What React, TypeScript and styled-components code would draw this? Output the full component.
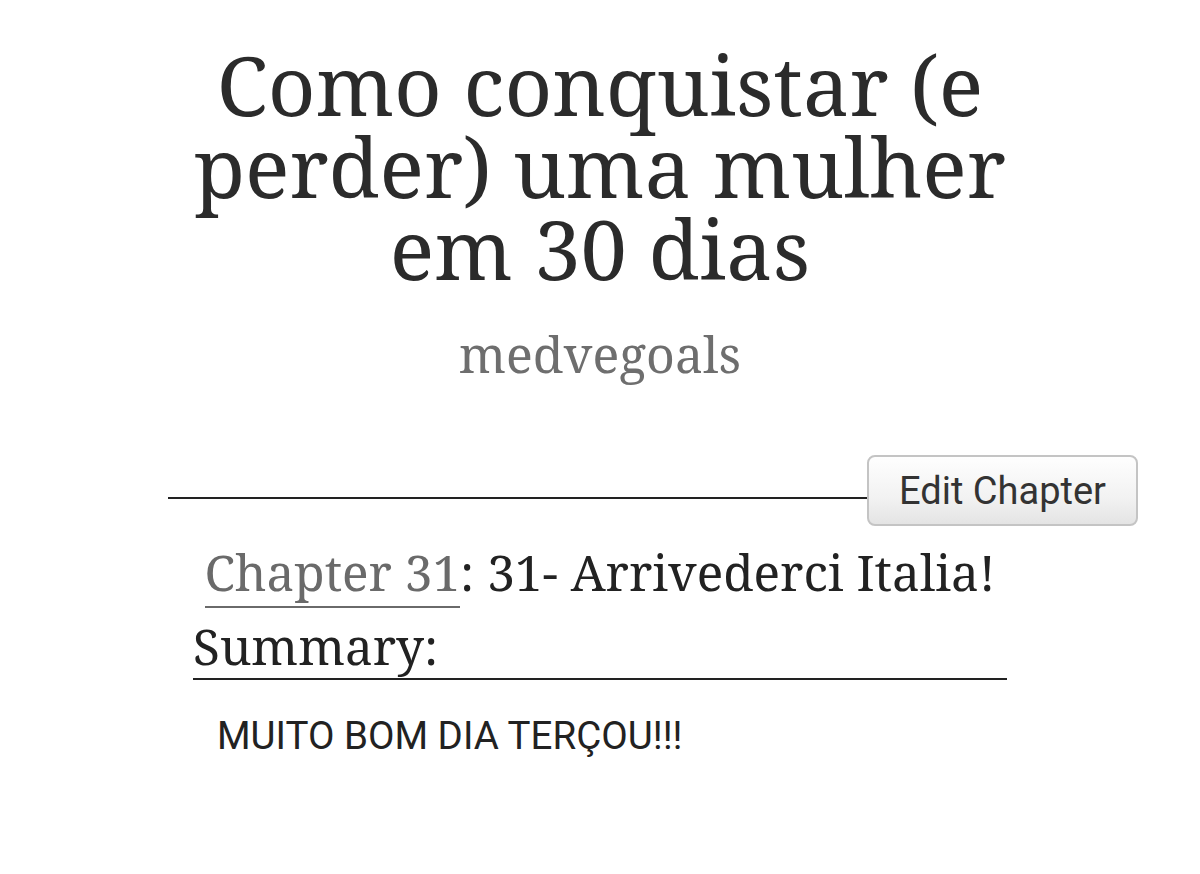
import React from "react";
import styled, { createGlobalStyle } from "styled-components";

const GlobalStyle = createGlobalStyle`
  html, body {
    margin: 0;
    padding: 0;
    background: #ffffff;
  }
  body {
    font-family: "Noto Serif", "DejaVu Serif", serif;
    color: #2b2b2b;
  }
`;

const Page = styled.div`
  width: 1200px;
  padding-top: 43px;
  padding-bottom: 80px;
`;

const Header = styled.header`
  display: flex;
  flex-direction: column;
  align-items: center;
`;

const Title = styled.h1`
  margin: 0;
  font-family: "Noto Serif", "DejaVu Serif", serif;
  font-weight: normal;
  font-size: 83px;
  line-height: 82px;
  text-align: center;
  color: #2b2b2b;
`;

const Author = styled.div`
  margin-top: 35px;
  font-family: "Noto Serif", "DejaVu Serif", serif;
  font-size: 50px;
  line-height: 60px;
  color: #6e6e6e;
`;

const Toolbar = styled.div`
  display: flex;
  align-items: flex-start;
  margin: 71px 62px 0 168px;
`;

const Rule = styled.div`
  flex: 1;
  height: 2px;
  margin-top: 42px;
  background: #222222;
`;

const EditButton = styled.button`
  box-sizing: border-box;
  height: 71px;
  padding: 0 30px;
  display: flex;
  align-items: center;
  font-family: Roboto, "Liberation Sans", sans-serif;
  font-size: 38px;
  color: #333333;
  border: 2px solid #c4c4c4;
  border-radius: 8px;
  background: linear-gradient(#fefefe, #f2f2f2 60%, #e4e4e4);
  cursor: pointer;
`;

const Chapter = styled.section`
  width: 814px;
  margin: 12px auto 0;
`;

const ChapterTitle = styled.h2`
  margin: 0;
  font-family: "Noto Serif", "DejaVu Serif", serif;
  font-weight: normal;
  font-size: 49.5px;
  line-height: normal;
  text-align: center;
  color: #222222;
`;

const ChapterLink = styled.a`
  color: #6a6a6a;
  text-decoration: none;
  border-bottom: 2px solid #6a6a6a;
`;

const SummaryHeading = styled.h3`
  margin: 10px 0 0;
  font-family: "Noto Serif", "DejaVu Serif", serif;
  font-weight: normal;
  font-size: 49.5px;
  line-height: 1.25;
  color: #222222;
  border-bottom: 2px solid #222222;
`;

const SummaryText = styled.p`
  margin: 33px 0 0;
  padding-left: 24px;
  font-family: Roboto, "Liberation Sans", sans-serif;
  font-size: 38.5px;
  line-height: normal;
  color: #222222;
`;

export default function App() {
  return (
    <>
      <GlobalStyle />
      <Page>
        <Header>
          <Title>
            Como conquistar (e
            <br />
            perder) uma mulher
            <br />
            em 30 dias
          </Title>
          <Author>medvegoals</Author>
        </Header>
        <Toolbar>
          <Rule />
          <EditButton>Edit Chapter</EditButton>
        </Toolbar>
        <Chapter>
          <ChapterTitle>
            <ChapterLink href="#">Chapter 31</ChapterLink>: 31- Arrivederci
            Italia!
          </ChapterTitle>
          <SummaryHeading>Summary:</SummaryHeading>
          <SummaryText>MUITO BOM DIA TERÇOU!!!</SummaryText>
        </Chapter>
      </Page>
    </>
  );
}
